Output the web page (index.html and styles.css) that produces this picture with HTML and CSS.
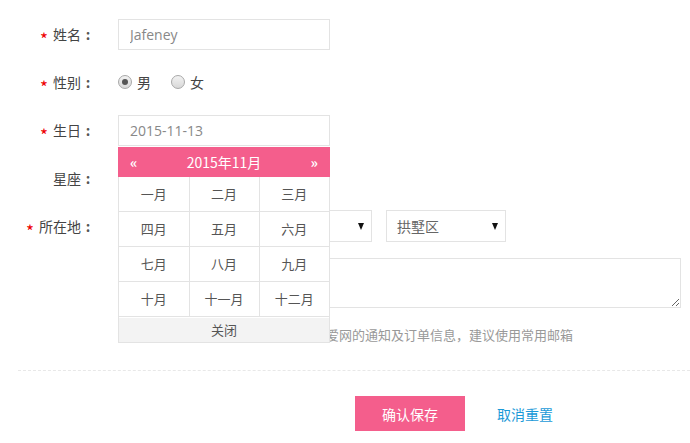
FILE: index.html
```html
<!DOCTYPE html>
<html lang="zh-CN">
<head>
  <meta charset="UTF-8">
  <title>个人资料</title>
  <link rel="stylesheet" href="styles.css">
</head>
<body>
  <form class="profile-form">
    <div class="row">
      <label class="label"><span class="star">*</span>姓名<span class="colon">:</span></label>
      <div class="field">
        <input class="text-input" type="text" value="Jafeney">
      </div>
    </div>

    <div class="row">
      <label class="label"><span class="star">*</span>性别<span class="colon">:</span></label>
      <div class="field radios">
        <span class="radio checked"></span><span class="radio-text">男</span>
        <span class="radio"></span><span class="radio-text">女</span>
      </div>
    </div>

    <div class="row">
      <label class="label"><span class="star">*</span>生日<span class="colon">:</span></label>
      <div class="field date-field">
        <input class="text-input" type="text" value="2015-11-13">

        <!-- month picker -->
        <div class="calendar">
          <div class="cal-head">
            <span class="cal-arrow">«</span>
            <span class="cal-title">2015年11月</span>
            <span class="cal-arrow">»</span>
          </div>
          <table class="cal-months">
            <tr><td>一月</td><td>二月</td><td>三月</td></tr>
            <tr><td>四月</td><td>五月</td><td>六月</td></tr>
            <tr><td>七月</td><td>八月</td><td>九月</td></tr>
            <tr><td>十月</td><td>十一月</td><td>十二月</td></tr>
          </table>
          <div class="cal-close">关闭</div>
        </div>
      </div>
    </div>

    <div class="row">
      <label class="label">星座<span class="colon">:</span></label>
      <div class="field">
        <div class="select">白羊座</div>
      </div>
    </div>

    <div class="row row-top">
      <label class="label"><span class="star">*</span>所在地<span class="colon">:</span></label>
      <div class="field column">
        <div class="selects">
          <div class="select">浙江省</div>
          <div class="select">杭州市</div>
          <div class="select">拱墅区</div>
        </div>
        <textarea class="address"></textarea>
        <p class="hint">该邮箱将会用于接收来自糖果甜蜜恋爱网的通知及订单信息，建议使用常用邮箱</p>
      </div>
    </div>

    <div class="divider"></div>

    <div class="actions">
      <button class="btn-save" type="button">确认保存</button>
      <a class="btn-reset" href="#">取消重置</a>
    </div>
  </form>
</body>
</html>
```

FILE: styles.css
```css
body {
  margin: 0;
  font-family: "Noto Sans CJK SC", "Open Sans", sans-serif;
  font-size: 14px;
  color: #444;
  background: #fff;
  overflow: hidden;
}

.profile-form {
  padding-top: 18px;
}

.row {
  display: flex;
  align-items: center;
  height: 32px;
  margin-bottom: 16px;
}

.row-top {
  align-items: flex-start;
  height: auto;
}

.label {
  width: 95px;
  flex-shrink: 0;
  text-align: right;
  line-height: 32px;
  color: #444;
}

.colon {
  display: inline-block;
  width: 14px;
  text-align: center;
  font-weight: bold;
  color: #555;
}

.star {
  display: inline-block;
  color: #e00;
  font-size: 17px;
  margin-right: 5px;
  line-height: 1;
  vertical-align: -6px;
}

.field {
  margin-left: 23px;
}

.column {
  display: flex;
  flex-direction: column;
}

.text-input {
  display: block;
  box-sizing: border-box;
  width: 212px;
  height: 31px;
  border: 1px solid #e3e3e3;
  padding: 0 11px;
  font-family: "Open Sans", "Noto Sans CJK SC", sans-serif;
  font-size: 14px;
  color: #888;
  outline: none;
}

/* radios */
.radios {
  display: flex;
  align-items: center;
  height: 31px;
}

.radio {
  box-sizing: border-box;
  width: 14px;
  height: 14px;
  border-radius: 50%;
  border: 1px solid #a8a8a8;
  background: linear-gradient(#f2f2f2, #d8d8d8);
  position: relative;
}

.radio.checked::after {
  content: "";
  position: absolute;
  left: 3px;
  top: 3px;
  width: 6px;
  height: 6px;
  border-radius: 50%;
  background: #555;
}

.radio-text {
  margin: 0 20px 0 5px;
}

/* month picker */
.date-field {
  position: relative;
}

.calendar {
  position: absolute;
  left: 0;
  top: 32px;
  width: 212px;
  box-sizing: border-box;
  border: 1px solid #e3e3e3;
  border-top: none;
  background: #fff;
  z-index: 5;
}

.cal-head {
  display: flex;
  justify-content: space-between;
  align-items: center;
  height: 30px;
  margin: 0 -1px;
  padding: 0 12px;
  background: #f45e8c;
  color: #fff;
}

.cal-arrow {
  font-size: 14px;
  font-weight: bold;
}

.cal-title {
  font-size: 14px;
}

.cal-months {
  width: 100%;
  border-collapse: collapse;
  table-layout: fixed;
}

.cal-months td {
  height: 34px;
  padding: 0;
  border: 1px solid #e3e3e3;
  text-align: center;
  font-size: 13px;
  color: #555;
}

.cal-months tr:first-child td {
  border-top: none;
}

.cal-months td:first-child {
  border-left: none;
}

.cal-months td:last-child {
  border-right: none;
}

.cal-close {
  height: 24px;
  line-height: 24px;
  margin-top: 1px;
  background: #f3f3f3;
  text-align: center;
  font-size: 13px;
  color: #555;
}

/* selects */
.selects {
  display: flex;
  gap: 14px;
}

.select {
  box-sizing: border-box;
  position: relative;
  width: 120px;
  height: 32px;
  line-height: 30px;
  border: 1px solid #e3e3e3;
  padding-left: 10px;
  color: #666;
}

.select::after {
  content: "";
  position: absolute;
  right: 7px;
  top: 12px;
  border-left: 3.5px solid transparent;
  border-right: 3.5px solid transparent;
  border-top: 7px solid #111;
}

.address {
  box-sizing: border-box;
  width: 563px;
  height: 50px;
  margin-top: 16px;
  border: 1px solid #e3e3e3;
  outline: none;
  display: block;
}

.hint {
  margin: 17px 0 0;
  font-size: 13px;
  line-height: 20px;
  color: #999;
}

.divider {
  margin: 25px 0 0 18px;
  border-top: 1px dashed #e8e8e8;
}

.actions {
  display: flex;
  align-items: center;
  margin: 25px 0 0 355px;
}

.btn-save {
  width: 110px;
  height: 35px;
  border: none;
  background: #f45e8c;
  color: #fff;
  font-family: inherit;
  font-size: 14px;
  cursor: pointer;
}

.btn-reset {
  margin-left: 32px;
  color: #1b9ad8;
  text-decoration: none;
  font-size: 14px;
}
```
